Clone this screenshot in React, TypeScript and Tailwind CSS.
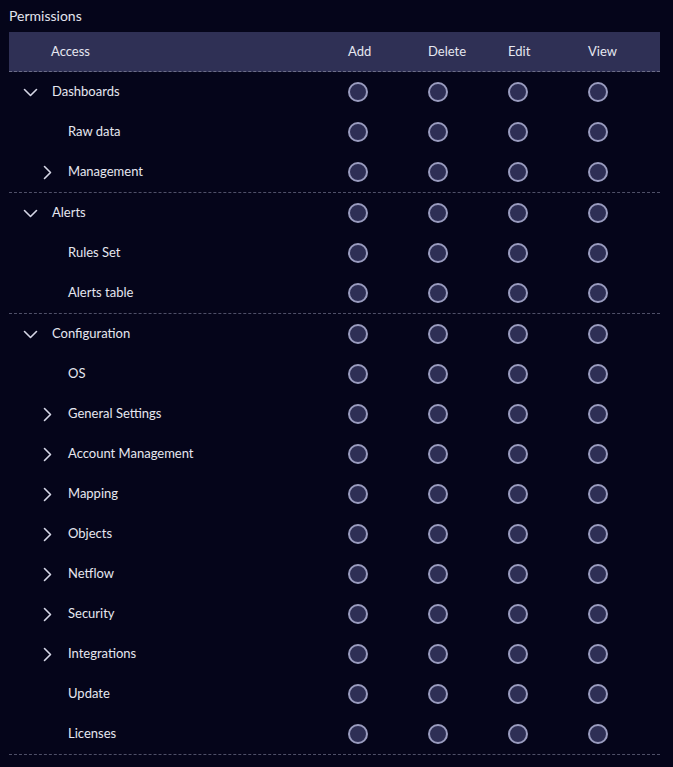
type Row = { label: string; level: 0 | 1; expandable?: boolean };

const groups: Row[][] = [
  [
    { label: 'Dashboards', level: 0, expandable: true },
    { label: 'Raw data', level: 1 },
    { label: 'Management', level: 1, expandable: true },
  ],
  [
    { label: 'Alerts', level: 0, expandable: true },
    { label: 'Rules Set', level: 1 },
    { label: 'Alerts table', level: 1 },
  ],
  [
    { label: 'Configuration', level: 0, expandable: true },
    { label: 'OS', level: 1 },
    { label: 'General Settings', level: 1, expandable: true },
    { label: 'Account Management', level: 1, expandable: true },
    { label: 'Mapping', level: 1, expandable: true },
    { label: 'Objects', level: 1, expandable: true },
    { label: 'Netflow', level: 1, expandable: true },
    { label: 'Security', level: 1, expandable: true },
    { label: 'Integrations', level: 1, expandable: true },
    { label: 'Update', level: 1 },
    { label: 'Licenses', level: 1 },
  ],
];

const actions = ['Add', 'Delete', 'Edit', 'View'];

function Radio() {
  return <span className="block h-5 w-5 rounded-full border-2 border-[#9a9cbf] bg-[#2e2f55]" />;
}

// open chevron, 13px wide
function CaretDown() {
  return (
    <svg width="15" height="9" viewBox="0 0 15 9" className="ml-[14px]">
      <polyline points="1.5,1.5 7.5,7.5 13.5,1.5" fill="none" stroke="#d6d7e6" strokeWidth="1.6" strokeLinecap="round" strokeLinejoin="round" />
    </svg>
  );
}

function CaretRight() {
  return (
    <svg width="9" height="15" viewBox="0 0 9 15" className="ml-[34px]">
      <polyline points="1.5,1.5 7.5,7.5 1.5,13.5" fill="none" stroke="#d6d7e6" strokeWidth="1.6" strokeLinecap="round" strokeLinejoin="round" />
    </svg>
  );
}

function PermissionRow({ row }: { row: Row }) {
  return (
    <div className="grid h-10 grid-cols-[1fr_80px_80px_80px_80px] items-center">
      <div className="flex items-center">
        <span className={row.level === 0 ? 'flex w-[43px] items-center' : 'flex w-[59px] items-center'}>
          {row.level === 0 ? <CaretDown /> : row.expandable && <CaretRight />}
        </span>
        <span className="text-[13px] text-[#e6e7f0]">{row.label}</span>
      </div>
      {actions.map((a) => (
        <div key={a} className="pl-2">
          <Radio />
        </div>
      ))}
    </div>
  );
}

export default function App() {
  return (
    <div
      className="min-h-[767px] w-[673px] bg-[#05051a] pt-[6px] text-[#e6e7f0]"
      style={{ fontFamily: 'Lato, "Open Sans", sans-serif' }}
    >
      <h2 className="pl-[9px] text-[14px] leading-5 text-[#e3e4ee]">Permissions</h2>
      <div className="ml-[9px] mt-[6px] w-[651px]">
        <div className="grid h-10 grid-cols-[1fr_80px_80px_80px_80px] items-center border-b border-dashed border-[#6b6c86] bg-[#2f3055] text-[13px]">
          <span className="pl-[42px]">Access</span>
          {actions.map((a) => (
            <span key={a} className="pl-2">{a}</span>
          ))}
        </div>
        {groups.map((g, i) => (
          <div key={i} className="border-b border-dashed border-[#4f5068]">
            {g.map((r) => (
              <PermissionRow key={r.label} row={r} />
            ))}
          </div>
        ))}
      </div>
    </div>
  );
}
